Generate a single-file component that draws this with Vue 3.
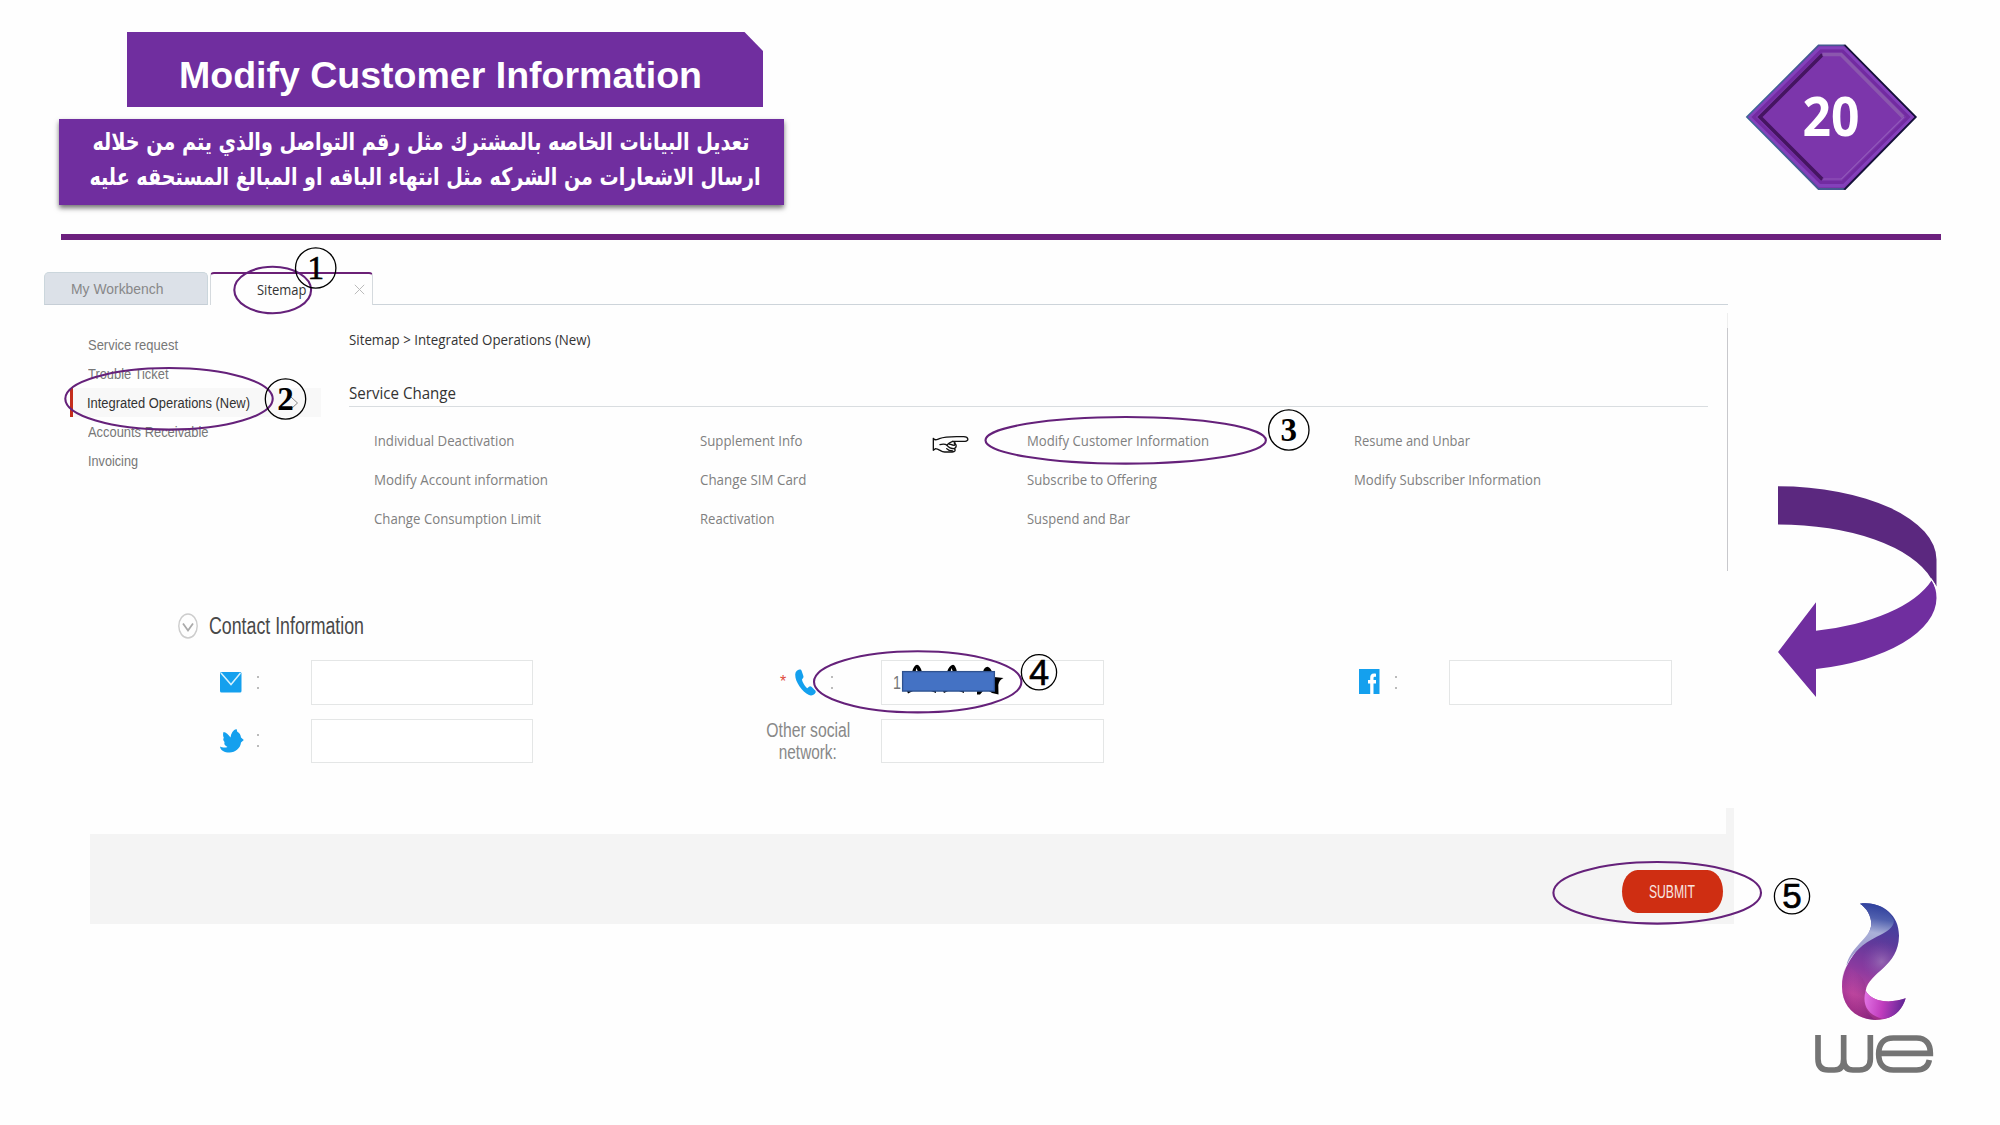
<script setup>
// Squeezes or stretches a text run horizontally so that it fills the given width.
const vFit = {
  mounted(el, { value }) {
    el.style.transform = `scaleX(${value / el.getBoundingClientRect().width})`
  }
}

const menu = [
  { label: 'Service request', w: 90 },
  { label: 'Trouble Ticket', w: 80.5 },
  { label: 'Integrated Operations (New)', w: 163, active: true },
  { label: 'Accounts Receivable', w: 120.5 },
  { label: 'Invoicing', w: 50 }
]

const operations = [
  { label: 'Individual Deactivation', w: 140.5 },
  { label: 'Supplement Info', w: 102.5 },
  { label: 'Modify Customer Information', w: 182 },
  { label: 'Resume and Unbar', w: 116 },
  { label: 'Modify Account information', w: 174 },
  { label: 'Change SIM Card', w: 106.5 },
  { label: 'Subscribe to Offering', w: 130 },
  { label: 'Modify Subscriber Information', w: 187 },
  { label: 'Change Consumption Limit', w: 167 },
  { label: 'Reactivation', w: 74.5 },
  { label: 'Suspend and Bar', w: 103 }
]

const rings = [
  { cx: 272.7, cy: 290, rx: 38.4, ry: 23.2 },
  { cx: 169, cy: 398.8, rx: 103.7, ry: 30.8 },
  { cx: 1125.7, cy: 440.3, rx: 140.2, ry: 23.3 },
  { cx: 917.7, cy: 681.8, rx: 103.7, ry: 30.6 },
  { cx: 1657.2, cy: 892.8, rx: 103.8, ry: 30.8 }
]

const steps = [
  { n: 1, x: 315.7, y: 268, r: 20.2, cls: 'serif thick', base: 279 },
  { n: 2, x: 285.5, y: 399, r: 20.2, cls: 'serif heavy', base: 410.3 },
  { n: 3, x: 1288.8, y: 430, r: 20.2, cls: 'serif heavy', base: 440.8 },
  { n: 4, x: 1039, y: 672.3, r: 17.6, cls: 'noto thick', base: 684.5 },
  { n: 5, x: 1792, y: 896.3, r: 17.6, cls: 'sans thick', base: 908.3 }
]
</script>

<template>
  <div class="slide">
    <header class="top">
      <div class="heading">
        <h1 class="title"><span v-fit="523" class="fit">Modify Customer Information</span></h1>
        <div class="desc" dir="rtl" lang="ar">
          <p class="l1"><span v-fit="657" class="fit rtl">تعديل البيانات الخاصه بالمشترك مثل رقم التواصل والذي يتم من خلاله</span></p>
          <p class="l2"><span v-fit="671" class="fit rtl">ارسال الاشعارات من الشركه مثل انتهاء الباقه او المبالغ المستحقه عليه</span></p>
        </div>
      </div>
      <svg class="badge" width="174" height="148" viewBox="0 0 174 148">
        <defs>
          <linearGradient id="rim" x1="0" x2="1" y1="0" y2="0">
            <stop offset="0" stop-color="#3f6799" /><stop offset=".57" stop-color="#46558f" /><stop offset=".58" stop-color="#15103a" /><stop offset="1" stop-color="#15103a" />
          </linearGradient>
        </defs>
        <path d="M3 74 74.500 2.300H101L171.800 74 101 146H74.500Z" fill="#7c36ab" stroke="url(#rim)" stroke-width="1.800" />
        <path d="M6 74 75.500 5H99.500L168 74 99.500 142.500H75.500Z" fill="none" stroke="#8440bb" stroke-width="3" />
        <path d="M9.500 74 77 8H98.500L164.500 74 98.500 139.500H77Z" fill="none" stroke="#722ba1" stroke-width="3" />
        <path d="M78.500 136.500 16 74 78.500 11.500" fill="none" stroke="#451561" stroke-width="3.600" />
        <path d="M78.500 11.500H97L159 74" fill="none" stroke="#8b57ae" stroke-width="3.600" />
        <path d="M160 74 97.500 136H78.500" fill="none" stroke="#9157ba" stroke-width="1.200" />
        <text x="58.500" y="93.300" textLength="57" lengthAdjust="spacingAndGlyphs" class="badge-no">20</text>
      </svg>
    </header>
    <div class="rule"></div>

    <nav class="tabs">
      <div class="tab idle"><span v-fit="92.500" class="fit">My Workbench</span></div>
      <div class="tab open">
        <span v-fit="49.500" class="fit">Sitemap</span>
        <svg width="11" height="11" viewBox="0 0 11 11"><path d="M.8.8 10.200 10.200M10.200.8.8 10.200" stroke="#bbb" fill="none" /></svg>
      </div>
      <div class="tab-line"></div>
    </nav>

    <section class="workspace">
      <aside class="menu">
        <div v-for="m in menu" :key="m.label" class="item" :class="{ active: m.active }">
          <span v-fit="m.w" class="fit">{{ m.label }}</span>
          <svg v-if="m.active" class="chev" width="9" height="14" viewBox="0 0 9 14"><path d="M1 1 7.500 7 1 13" stroke="#888" fill="none" /></svg>
        </div>
      </aside>
      <main class="content">
        <div class="crumb"><span v-fit="241.500" class="fit">Sitemap &gt; Integrated Operations (New)</span></div>
        <h2 class="group"><span v-fit="107" class="fit">Service Change</span></h2>
        <div class="ops">
          <div v-for="o in operations" :key="o.label"><span v-fit="o.w" class="fit">{{ o.label }}</span></div>
        </div>
      </main>
      <div class="edge"></div>
    </section>

    <section class="contact">
      <div class="contact-head">
        <svg width="20" height="26" viewBox="0 0 20 26"><ellipse cx="10" cy="13" rx="9.200" ry="12" fill="none" stroke="#ccc" stroke-width="1.400" /><path d="M5 10.500 10 17.500 15 10.500" fill="none" stroke="#aaa" stroke-width="1.800" /></svg>
        <span v-fit="155" class="fit">Contact Information</span>
      </div>
      <div class="fields">
        <div class="field f1">
          <svg width="24" height="21" viewBox="0 0 24 21"><rect width="21.500" height="20.500" rx="1.500" fill="#14a0ee" /><path d="M1 1 11 12.500 20.500 1" stroke="#d5f1fd" stroke-width="1.500" fill="none" /></svg>
          <i class="colon"></i><div class="input"></div>
        </div>
        <div class="field f2">
          <b class="star">*</b>
          <svg width="21" height="27" viewBox="0 0 21 27"><path d="M4.500.5C2.500.7.3 2.500.2 5.500.1 13 7 22.500 14 26c2 1 4.800.4 6.500-2.200.5-1 .2-1.800-.5-2.500l-3.500-3.600c-1-.9-2-.6-2.800.2l-1.400 1.300C10 17.500 7.500 13.500 7 10.500l1.200-1.800c.5-.8.3-1.500 0-2.300L6.600 1.700C6.200.6 5.500.3 4.500.5Z" fill="#14a0ee" /></svg>
          <i class="colon"></i><div class="input"><span>1</span></div>
        </div>
        <div class="field f3">
          <svg width="21" height="26" viewBox="0 0 21 26"><path d="M0 0H20.500V25H0Z" fill="#14a0ee" /><path d="M17 4.700C12.500 4 11.200 5.500 11.200 9v2H9v3.500h2.200V25.500h3.300V14.500h2.500V11H14.500V9c0-1.100.8-1.300 2.500-1.200Z" fill="#fff" /></svg>
          <i class="colon"></i><div class="input"></div>
        </div>
        <div class="field f1">
          <svg width="24" height="24" viewBox="0 0 24 24"><path d="M3.500 3C6 3.300 8.500 5.500 10.500 8.500 11 4 13 1 16.500 0l.8 2.800C19.500 3.800 20.800 6 21 8.500L23.800 11 21 13.500C20.500 19 15.500 23.500 9.500 23.500 4.500 23.500.5 21.500 0 17.500c2 1 5 1.500 7.500.5C4.500 16.500 4 15 4.500 13 3 11.500 3 10 3.800 8.800 3 7 2.800 5 3.500 3Z" fill="#14a0ee" /></svg>
          <i class="colon"></i><div class="input"></div>
        </div>
        <div class="field f2 social">
          <label><span v-fit="84" class="fit mid">Other social</span><br /><span v-fit="58" class="fit mid">network:</span></label>
          <div class="input"></div>
        </div>
      </div>
    </section>

    <div class="strip"></div>
    <footer class="bar">
      <button class="submit"><span v-fit="46" class="fit mid">SUBMIT</span></button>
    </footer>

    <svg class="marks" width="2000" height="1125" viewBox="0 0 2000 1125">
      <defs>
        <linearGradient id="flame" gradientUnits="userSpaceOnUse" x1="500" y1="340" x2="400" y2="650">
          <stop offset="0" stop-color="#38419e" /><stop offset=".3" stop-color="#613a9b" /><stop offset=".55" stop-color="#8a3a9f" /><stop offset=".8" stop-color="#bb459d" /><stop offset="1" stop-color="#93277f" />
        </linearGradient>
        <radialGradient id="glow" gradientUnits="userSpaceOnUse" cx="485" cy="485" r="60">
          <stop offset="0" stop-color="#a884c0" stop-opacity=".6" /><stop offset="1" stop-color="#8a52ae" stop-opacity="0" />
        </radialGradient>
        <linearGradient id="shade" gradientUnits="userSpaceOnUse" x1="375" y1="560" x2="455" y2="560">
          <stop offset="0" stop-color="#8a1f8f" stop-opacity=".5" /><stop offset=".3" stop-color="#c43fa0" stop-opacity=".2" /><stop offset="1" stop-color="#5b166f" stop-opacity=".75" />
        </linearGradient>
        <linearGradient id="tip" gradientUnits="userSpaceOnUse" x1="460" y1="310" x2="430" y2="480">
          <stop offset="0" stop-color="#2e3f9c" /><stop offset=".25" stop-color="#5060ae" /><stop offset=".5" stop-color="#aab0d8" /><stop offset="1" stop-color="#9c98cc" />
        </linearGradient>
        <linearGradient id="tail" gradientUnits="userSpaceOnUse" x1="435" y1="600" x2="555" y2="620">
          <stop offset="0" stop-color="#e070e2" /><stop offset=".45" stop-color="#c03cbd" /><stop offset="1" stop-color="#5b2694" />
        </linearGradient>
      </defs>

      <!-- return arrow -->
      <path d="M1778 486.300A158.500 73.300 0 0 1 1936.500 559.600V586.500L1931.300 578.700A158.500 73.300 0 0 0 1778 524.500Z" fill="#5b287f" />
      <path d="M1931.600 580.500Q1936.500 588 1936.500 598A158.500 73.300 0 0 1 1816 669V697L1778 652 1816 602.300V630.700A158.500 73.300 0 0 0 1931.600 580.500Z" fill="#702e9f" />
      <path d="M1931 578.500Q1935 583.500 1936.800 590" fill="none" stroke="#fff" stroke-width="1.200" />

      <!-- scribble and redaction over the phone number -->
      <g fill="#000">
        <path d="M912 672Q914 665 917 664.800 920 665 922 672H918L916.500 668 915.500 672ZM947 672Q949 665.500 953 664.800 955.500 665 957 672H953L951.500 668 950.500 672ZM983 672Q984 667 987.500 666.800 991 668 992 672ZM994 677 1003.500 678Q999 680 998.300 685L998.500 694.500 992 693 989 691 983 691 980 694.500H977V691Z" />
        <path d="M907 691H913L908 693.500ZM931 691H936V693ZM943 691H948L944 693ZM959 691H964V693Z" />
      </g>
      <rect x="902.600" y="671.600" width="91.800" height="19.500" fill="#4472c4" stroke="#2f528f" stroke-width="1.300" />

      <!-- pointing hand -->
      <g transform="translate(900 380) scale(.33333)" fill="none" stroke="#111" stroke-width="4" stroke-linejoin="round" stroke-linecap="round">
        <path d="M100 175V211L106 206C118 206 122 216 134 216H157C164 216 169 211 163 206M100 175C104 183 110 179 118 176 134 170 150 170 170 170H191C207 171 207 183 195 184L158 184C150 187 145 190 141 195" />
        <path d="M120 194C128 192 136 192 141 196 147 204 154 206 163 206 170 202 171 193 163 190M158 184C166 186 168 191 163 196 156 196 152 193 148 192M140 206C145 212 151 213 158 213" />
      </g>

      <ellipse v-for="(e, i) in rings" :key="i" v-bind="e" fill="none" stroke="#65217a" stroke-width="2.100" />
      <g v-for="s in steps" :key="s.n">
        <circle :cx="s.x" :cy="s.y" :r="s.r" fill="none" stroke="#000" stroke-width="1.300" />
        <text :x="s.x" :y="s.base" text-anchor="middle" :class="s.cls">{{ s.n }}</text>
      </g>

      <!-- brand mark -->
      <g transform="translate(1720 800) scale(.33333)">
        <path d="M420 311C480 303 538 340 537 408 536 500 448 515 437 572 455 606 510 612 557 595 544 640 510 660 465 660 405 657 366 618 366 560 366 470 450 430 454 372 453 345 440 325 420 311Z" fill="url(#flame)" />
        <path d="M522 370C500 400 400 430 379 498 366 520 366 540 366 560 366 618 405 657 465 660 440 640 425 610 437 572 448 515 536 500 537 408 537 393 530 380 522 370Z" fill="url(#glow)" />
        <path d="M379 498C366 520 366 540 366 560 366 618 405 657 465 660 440 640 425 610 437 572 440 540 420 520 379 498Z" fill="url(#shade)" opacity=".45" />
        <path d="M420 311C465 305 505 325 522 362 520 385 500 395 470 410 430 430 395 460 379 498 390 440 452 415 454 372 453 345 440 325 420 311Z" fill="url(#tip)" />
        <path d="M437 572C455 606 510 612 557 595 544 635 520 655 487 656 440 645 426 610 437 572Z" fill="url(#tail)" />
        <g fill="none" stroke="#747474" stroke-width="17">
          <path d="M294 705V777C294 798 304 810 325 810H343C362 810 371 798 371 777V705M371 777C371 798 380 810 399 810H418C440 810 451 798 451 777V705" />
          <path d="M477 760H631C631 732 618 714 590 714H520C490 714 476 732 476 762 476 792 490 810 520 810H590C612 810 624 800 628 780" />
        </g>
      </g>
    </svg>
  </div>
</template>

<style>
body { margin: 0; background: #fff; }
</style>

<style scoped>
.slide { position: relative; width: 2000px; height: 1125px; overflow: hidden; background: #fefefe; font-family: "Liberation Sans", Arial, sans-serif; }
.fit { display: inline-block; white-space: nowrap; transform-origin: 0 50%; }
.fit.rtl { transform-origin: 100% 50%; }
.fit.mid { transform-origin: 50% 50%; }
h1, h2, p { margin: 0; }

.top { display: flex; justify-content: space-between; height: 234px; box-sizing: border-box; padding: 32px 82px 0 59px; }
.title { width: 636px; height: 75px; margin-left: 68px; box-sizing: border-box; padding-left: 52px; background: #702e9f; color: #fff; font-size: 37.300px; line-height: 86px; clip-path: polygon(0 0, 617.500px 0, 100% 19px, 100% 100%, 0 100%); }
.desc { width: 725px; height: 86px; margin-top: 11.500px; box-sizing: border-box; background: #702e9f; color: #fff; box-shadow: 0 3px 5px rgba(0, 0, 0, .55); font: bold 24px/35px "DejaVu Sans", sans-serif; padding-top: 6.500px; }
.l1 { padding-right: 35px; }
.l2 { padding-right: 24px; }
.badge { margin-top: 11px; flex: none; }
.badge-no { font: bold 53px "Open Sans", sans-serif; fill: #fff; }
.rule { width: 1879.500px; height: 6px; margin-left: 61px; background: #6c207e; }

.tabs { display: flex; height: 33px; margin: 32px 272px 0 44px; }
.tab { box-sizing: border-box; font-size: 15px; line-height: 34px; }
.idle { width: 164px; padding-left: 26px; margin-right: 2px; background: #dce1e8; border: 1px solid #cbd6dc; border-bottom-color: #c6ced6; border-radius: 5px 5px 0 0; color: #888; line-height: 31px; }
.open { display: flex; align-items: center; justify-content: space-between; width: 163px; padding: 0 7px 0 46px; border: 1px solid #d5dade; border-top: 2px solid #6b2076; border-bottom: 0; border-radius: 4px 4px 0 0; color: #333; font-family: "Open Sans", sans-serif; font-size: 14.500px; line-height: 32px; }
.tab-line { flex: 1; border-bottom: 1px solid #cdd4da; }

.workspace { display: flex; height: 266px; margin-left: 70px; }
.menu { width: 251px; padding-top: 25px; }
.item { display: flex; align-items: center; justify-content: space-between; height: 29.200px; padding-left: 18px; font-size: 14px; color: #777; }
.item.active { height: 29px; padding: 0 22px 0 14px; border-left: 3px solid #c42d1c; background: #f8f8f8; color: #333; }
.chev { flex: none; }
.content { width: 1359px; margin-left: 28px; font-family: "Open Sans", sans-serif; }
.crumb { margin-top: 25px; height: 20px; line-height: 20px; font-size: 14.500px; color: #333; }
.group { height: 31px; margin-top: 25px; line-height: 35px; font-size: 16.500px; font-weight: 400; color: #333; border-bottom: 1px solid #d9dde0; }
.ops { display: grid; grid-template-columns: 326px 327px 326.500px 1fr; grid-auto-rows: 39.300px; margin-left: 25px; padding-top: 13.500px; color: #808080; font-size: 14.500px; line-height: 39px; }
.edge { width: 1px; height: 243px; margin: 8px 0 0 19px; border-top: 15px solid #eee; background: #c8c8cc; }

.contact { height: 237px; box-sizing: border-box; padding: 42px 0 0 178px; }
.contact-head { display: flex; align-items: center; gap: 11px; height: 26px; font-size: 23.500px; line-height: 26px; color: #484848; }
.fields { display: grid; grid-template-columns: 569px 569px 1fr; grid-template-rows: 44.500px 44.500px; row-gap: 14px; margin-top: 21px; }
.field { display: flex; align-items: center; }
.f1 { padding-left: 41.500px; }
.f1 svg { flex: none; }
.f1 .colon { margin-left: 13px; margin-right: 52px; }
.f2 { padding-left: 33px; }
.star { width: 15px; color: #e04b3b; font: 16px/16px "Liberation Sans", sans-serif; }
.f2 .colon { margin-left: 15px; margin-right: 48px; }
.f3 { padding-left: 43px; }
.f3 .colon { margin-left: 14.500px; margin-right: 52.500px; }
.colon { width: 2px; height: 9px; border: solid #bbb; border-width: 2px 0; flex: none; }
.input { width: 222.500px; height: 44.500px; box-sizing: border-box; border: 1.500px solid #e4e6e6; background: #fff; padding-left: 11px; font-size: 19px; line-height: 43px; color: #777; flex: none; }
.input span { display: inline-block; transform: scaleX(.75); transform-origin: 0 50%; }
.social { padding-left: 6px; }
.social label { width: 110px; margin-right: 18px; text-align: center; font-size: 20px; line-height: 22px; color: #888; white-space: nowrap; }

.strip { width: 7.500px; height: 26px; margin-left: 1726px; background: #f4f4f4; }
.bar { display: flex; justify-content: flex-end; width: 1643.500px; height: 90px; margin-left: 90px; box-sizing: border-box; padding: 36px 11px 0 0; background: #f4f4f4; }
.submit { width: 101px; height: 43px; padding: 0; border: 0; border-radius: 16px / 22px; background: #cf2e12; color: #f8e5e0; font: 18.500px/43px "Liberation Sans", sans-serif; }
.marks { position: absolute; left: 0; top: 0; pointer-events: none; }
.serif { font: 33px "Liberation Serif", serif; }
.heavy { font-weight: 700; }
.thick { stroke: #000; stroke-width: .7; }
.noto { font: 34px "Noto Sans", sans-serif; }
.sans { font: 35px "Liberation Sans", sans-serif; }
</style>
